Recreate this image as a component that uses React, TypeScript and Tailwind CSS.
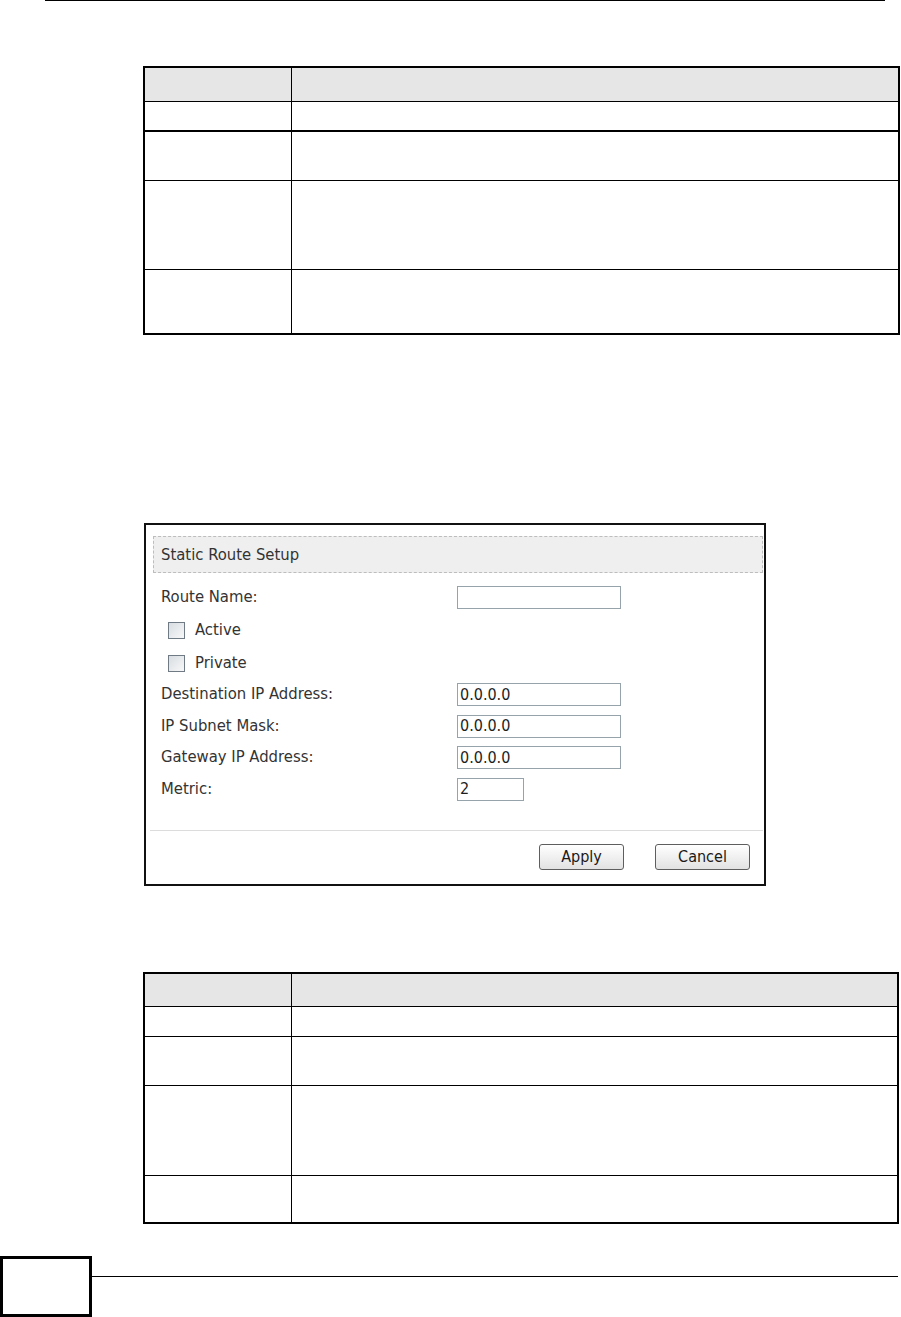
import React from 'react';

type Row = { h: number; bottom: 0 | 1 | 2; head?: boolean };

const TABLE_ONE: Row[] = [
  { h: 33, bottom: 1, head: true },
  { h: 28, bottom: 2 },
  { h: 48, bottom: 1 },
  { h: 88, bottom: 1 },
  { h: 63, bottom: 0 },
];

const TABLE_TWO: Row[] = [
  { h: 32, bottom: 1, head: true },
  { h: 29, bottom: 1 },
  { h: 48, bottom: 1 },
  { h: 89, bottom: 1 },
  { h: 46, bottom: 0 },
];

const FONT = { fontFamily: '"DejaVu Sans Condensed", "DejaVu Sans", sans-serif' };

function GridTable({ rows, width }: { rows: Row[]; width: string }) {
  return (
    <div className={`ml-[143px] ${width} border-2 border-black`}>
      {rows.map((row, i) => (
        <div
          key={i}
          className={`grid grid-cols-[147px_1fr] ${row.head ? 'bg-[#e6e6e6]' : 'bg-white'} ${
            row.bottom === 2 ? 'border-b-2 border-black' : row.bottom === 1 ? 'border-b border-black' : ''
          }`}
          style={{ height: row.h + row.bottom }}
        >
          <div className="border-r border-black" />
          <div />
        </div>
      ))}
    </div>
  );
}

function TextBox({ value, wide = true }: { value?: string; wide?: boolean }) {
  return (
    <div
      className={`${wide ? 'w-[164px]' : 'w-[67px]'} h-[23px] border border-[#97a3ab] bg-white flex items-center pl-[2px] text-[16px] text-[#1e1e1e]`}
    >
      {value}
    </div>
  );
}

function CheckRow({ label, h }: { label: string; h: string }) {
  return (
    <div className={`${h} flex items-center`}>
      <div className="ml-[7px] w-[17px] h-[17px] border border-[#6f7a85] bg-gradient-to-br from-[#d9dde1] to-[#f7f8f9]" />
      <span className="ml-[10px]">{label}</span>
    </div>
  );
}

function FieldRow({ label, h, value, wide = true }: { label: string; h: string; value?: string; wide?: boolean }) {
  return (
    <div className={`${h} flex items-center`}>
      <span className="w-[296px] shrink-0">{label}</span>
      <TextBox value={value} wide={wide} />
    </div>
  );
}

function StaticRouteSetup() {
  return (
    <div
      className="ml-[144px] mt-[188px] w-[622px] h-[363px] border-2 border-[#111] bg-white flex flex-col text-[16.5px] text-[#333]"
      style={FONT}
    >
      <div className="mt-[11px] ml-[7px] mr-[1px] h-[37px] border border-dashed border-[#bdbdbd] bg-[#efefef] flex items-center pl-[7px] pt-[2px]">
        Static Route Setup
      </div>

      <div className="mt-[8px] pl-[15px] flex flex-col">
        <FieldRow label="Route Name:" h="h-[33px]" />
        <CheckRow label="Active" h="h-[33px]" />
        <CheckRow label="Private" h="h-[32px]" />
        <FieldRow label="Destination IP Address:" h="h-[31px]" value="0.0.0.0" />
        <FieldRow label="IP Subnet Mask:" h="h-[32px]" value="0.0.0.0" />
        <FieldRow label="Gateway IP Address:" h="h-[31px]" value="0.0.0.0" />
        <FieldRow label="Metric:" h="h-[32px]" value="2" wide={false} />
      </div>

      <div className="mt-[25px] ml-[4px] mr-[1px] h-px bg-[#dcdcdc]" />

      <div className="mt-[13px] flex justify-end gap-[31px] pr-[14px]">
        <button
          type="button"
          className="w-[85px] h-[26px] rounded-[3px] border border-[#5e5e5e] bg-gradient-to-b from-white to-[#e2e2e2] text-[16px] text-[#1a1a1a]"
        >
          Apply
        </button>
        <button
          type="button"
          className="w-[95px] h-[26px] rounded-[3px] border border-[#5e5e5e] bg-gradient-to-b from-white to-[#e2e2e2] text-[16px] text-[#1a1a1a]"
        >
          Cancel
        </button>
      </div>
    </div>
  );
}

export default function App() {
  return (
    <div className="w-[901px] h-[1317px] bg-white flex flex-col overflow-hidden">
      <div className="ml-[45px] w-[840px] h-px bg-black" />

      <div className="mt-[65px]">
        <GridTable rows={TABLE_ONE} width="w-[757px]" />
      </div>

      <StaticRouteSetup />

      <div className="mt-[86px]">
        <GridTable rows={TABLE_TWO} width="w-[756px]" />
      </div>

      <div className="mt-[32px] flex">
        <div className="w-[92px] h-[61px] border-[3px] border-black shrink-0" />
        <div className="mt-[20px] w-[806px] h-px bg-black" />
      </div>
    </div>
  );
}
